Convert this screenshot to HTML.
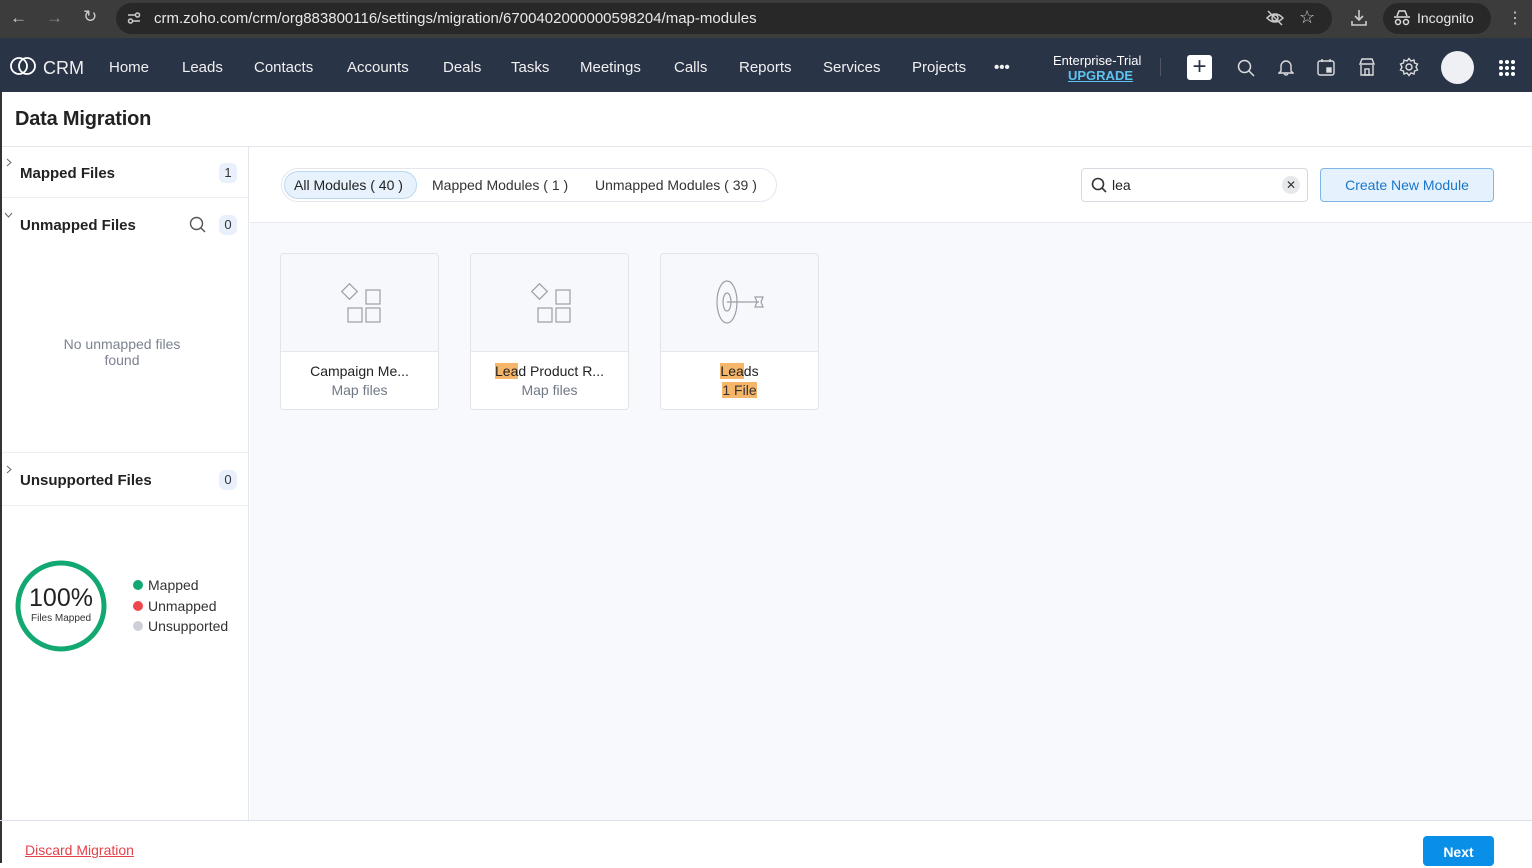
<!DOCTYPE html>
<html><head><meta charset="utf-8"><style>
*{box-sizing:border-box;margin:0;padding:0}
body{width:1532px;height:863px;overflow:hidden;font-family:"Liberation Sans",sans-serif;background:#fff;position:relative}
.abs{position:absolute}
#chrome{left:0;top:0;width:1532px;height:38px;background:#3c3c3c}
#url{left:116px;top:3px;width:1216px;height:31px;border-radius:16px;background:#282828;color:#e8e8e8;font-size:15px;line-height:31px;padding-left:38px}
#inc{left:1383px;top:3px;width:108px;height:31px;border-radius:16px;background:#282828;color:#e8e8e8;font-size:14px;line-height:31px;padding-left:34px}
#nav{left:0;top:38px;width:1532px;height:54px;background:#2a3447;color:#fff}
#nav .it{position:absolute;top:0;line-height:60px;font-size:15px;color:#f0f0f0}
.side{left:2px;top:147px;width:247px;height:673px;background:#fff;border-right:1px solid #e3e6ec}
.row{position:absolute;left:0;width:246px;border-bottom:1px solid #eceef2}
.row b{position:absolute;left:18px;font-size:15px;color:#222}
.badge{position:absolute;right:11px;width:18px;height:20px;border-radius:6px;background:#e8f1fb;font-size:13px;text-align:center;line-height:20px;color:#333}
.card{position:absolute;top:253px;width:159px;height:157px;border:1px solid #e2e4ea;border-radius:4px;background:#fff;overflow:hidden}
.card .top{height:98px;background:#f7f8fb;border-bottom:1px solid #e6e8ee;position:relative}
.card .t1{text-align:center;font-size:14px;color:#222;margin-top:11px}
.card .t2{text-align:center;font-size:14px;color:#707785;margin-top:3px}
.hl{background:#f6b66a}
</style></head><body>
<div id="chrome" class="abs"></div>
<div class="abs" style="left:10px;top:8px;color:#ccc;font-size:17px">←</div>
<div class="abs" style="left:46px;top:8px;color:#888;font-size:17px">→</div>
<div class="abs" style="left:83px;top:7px;color:#ccc;font-size:17px">↻</div>
<div id="url" class="abs">crm.zoho.com/crm/org883800116/settings/migration/6700402000000598204/map-modules</div>
<svg class="abs" style="left:127px;top:11px" width="14" height="14" fill="none" stroke="#ccc" stroke-width="1.5"><line x1="1" y1="4" x2="8" y2="4"/><circle cx="10.5" cy="4" r="2"/><line x1="6" y1="10" x2="13" y2="10"/><circle cx="3.5" cy="10" r="2"/></svg>
<svg class="abs" style="left:1265px;top:9px" width="20" height="18" fill="none" stroke="#ccc" stroke-width="1.5"><path d="M2 9 Q10 1 18 9 Q10 17 2 9Z"/><circle cx="10" cy="9" r="3"/><line x1="3" y1="2" x2="17" y2="16"/></svg>
<div class="abs" style="left:1299px;top:7px;color:#ccc;font-size:18px">☆</div>
<svg class="abs" style="left:1350px;top:9px" width="18" height="18" fill="none" stroke="#ccc" stroke-width="1.6"><line x1="9" y1="1" x2="9" y2="11"/><path d="M5 7 L9 11 L13 7"/><path d="M2 12 V16 H16 V12"/></svg>
<div id="inc" class="abs">Incognito</div>
<svg class="abs" style="left:1393px;top:10px" width="18" height="16" fill="none" stroke="#ddd" stroke-width="1.5"><path d="M4 6 L6 1 H12 L14 6"/><line x1="1" y1="7" x2="17" y2="7"/><circle cx="5" cy="12" r="2.5"/><circle cx="13" cy="12" r="2.5"/></svg>
<div class="abs" style="left:1507px;top:8px;color:#ccc;font-size:16px">⋮</div>
<div id="nav" class="abs">
 <svg class="abs" style="left:10px;top:19px" width="26" height="18" viewBox="0 0 26 18"><ellipse cx="9" cy="9" rx="8" ry="8" fill="none" stroke="#fff" stroke-width="1.8"/><ellipse cx="17" cy="9" rx="8" ry="8" fill="none" stroke="#fff" stroke-width="1.8"/></svg>
 <div class="it" style="left:43px;font-size:18px">CRM</div>
 <div class="it" style="left:109px">Home</div>
 <div class="it" style="left:182px">Leads</div>
 <div class="it" style="left:254px">Contacts</div>
 <div class="it" style="left:347px">Accounts</div>
 <div class="it" style="left:443px">Deals</div>
 <div class="it" style="left:511px">Tasks</div>
 <div class="it" style="left:580px">Meetings</div>
 <div class="it" style="left:674px">Calls</div>
 <div class="it" style="left:739px">Reports</div>
 <div class="it" style="left:823px">Services</div>
 <div class="it" style="left:912px">Projects</div>
 <div class="it" style="left:994px;font-weight:bold">•••</div>
 <div class="abs" style="left:1053px;top:15px;font-size:13px;color:#fff">Enterprise-Trial</div>
 <div class="abs" style="left:1068px;top:30px;font-size:13px;color:#5ec3f0;font-weight:bold;text-decoration:underline">UPGRADE</div>
 <div class="abs" style="left:1160px;top:20px;width:1px;height:18px;background:#556"></div>
 <div class="abs" style="left:1187px;top:17px;width:25px;height:25px;background:#fff;border-radius:3px;color:#2a3447;font-size:24px;line-height:24px;text-align:center">+</div>
 <svg class="abs" style="left:1237px;top:21px" width="18" height="18" fill="none" stroke="#ddd" stroke-width="1.5"><circle cx="7.5" cy="7.5" r="6"/><line x1="12" y1="12" x2="17" y2="17"/></svg>
 <svg class="abs" style="left:1278px;top:20px" width="16" height="18" fill="none" stroke="#ddd" stroke-width="1.4"><path d="M3 13 V8 A5 5 0 0 1 13 8 V13 L15 15 H1 Z"/><path d="M6 16 Q8 18 10 16"/></svg>
 <svg class="abs" style="left:1317px;top:20px" width="18" height="18" fill="none" stroke="#ddd" stroke-width="1.4"><rect x="1" y="3" width="16" height="14" rx="2"/><line x1="5" y1="1" x2="5" y2="4"/><line x1="13" y1="1" x2="13" y2="4"/><rect x="10" y="10" width="4" height="4" fill="#ddd"/></svg>
 <svg class="abs" style="left:1358px;top:20px" width="18" height="18" fill="none" stroke="#ddd" stroke-width="1.4"><path d="M2 6 L4 1 H14 L16 6 Z"/><path d="M3 7 V17 H15 V7"/><rect x="7" y="11" width="4" height="6"/></svg>
 <svg class="abs" style="left:1399px;top:19px" width="20" height="20" fill="none" stroke="#ddd" stroke-width="1.4"><circle cx="10" cy="10" r="3"/><path d="M10 1.5 L12 4 L15 3 L15.5 6 L18.5 7 L17 10 L18.5 13 L15.5 14 L15 17 L12 16 L10 18.5 L8 16 L5 17 L4.5 14 L1.5 13 L3 10 L1.5 7 L4.5 6 L5 3 L8 4 Z"/></svg>
 <div class="abs" style="left:1441px;top:13px;width:33px;height:33px;border-radius:50%;background:#eef0f4"></div>
 <svg class="abs" style="left:1498px;top:21px" width="18" height="18"><g fill="#fff"><circle cx="3" cy="3" r="2"/><circle cx="9" cy="3" r="2"/><circle cx="15" cy="3" r="2"/><circle cx="3" cy="9" r="2"/><circle cx="9" cy="9" r="2"/><circle cx="15" cy="9" r="2"/><circle cx="3" cy="15" r="2"/><circle cx="9" cy="15" r="2"/><circle cx="15" cy="15" r="2"/></g></svg>
</div>
<div class="abs" style="left:0;top:92px;width:2px;height:771px;background:#333"></div>
<div class="abs" style="left:15px;top:108px;font-size:20px;color:#222;font-weight:bold;letter-spacing:-0.2px">Data Migration</div>
<div class="abs" style="left:2px;top:146px;width:1530px;height:1px;background:#e3e6ec"></div>
<div class="side abs">
 <div class="row" style="top:0;height:51px"><svg class="abs" style="left:4px;top:11px" width="6" height="9" fill="none" stroke="#666"><path d="M1 1 L5 4.5 L1 8"/></svg><b style="top:18px">Mapped Files</b><div class="badge" style="top:16px">1</div></div>
 <div class="row" style="top:51px;height:255px"><svg class="abs" style="left:2px;top:14px" width="9" height="6" fill="none" stroke="#666"><path d="M1 1 L4.5 5 L8 1"/></svg><b style="top:19px">Unmapped Files</b>
  <svg class="abs" style="left:187px;top:18px" width="18" height="18" fill="none" stroke="#555" stroke-width="1.4"><circle cx="7.5" cy="7.5" r="6"/><line x1="12" y1="12" x2="16" y2="16"/></svg><div class="badge" style="top:17px">0</div>
  <div class="abs" style="left:0;width:240px;top:138px;text-align:center;font-size:14px;color:#7c8290;line-height:16px">No unmapped files<br>found</div></div>
 <div class="row" style="top:306px;height:53px"><svg class="abs" style="left:4px;top:12px" width="6" height="9" fill="none" stroke="#666"><path d="M1 1 L5 4.5 L1 8"/></svg><b style="top:19px">Unsupported Files</b><div class="badge" style="top:17px">0</div></div>
 <svg class="abs" style="left:12px;top:412px" width="94" height="94"><circle cx="47" cy="47" r="43" fill="none" stroke="#12a872" stroke-width="5"/></svg>
 <div class="abs" style="left:14px;top:437px;width:90px;text-align:center;font-size:25px;color:#222">100%</div>
 <div class="abs" style="left:14px;top:466px;width:90px;text-align:center;font-size:10px;color:#333">Files Mapped</div>
 <div class="abs" style="left:131px;top:428px;font-size:14px;color:#333;line-height:20.5px">
  <div><span style="display:inline-block;width:10px;height:10px;border-radius:50%;background:#12a872;margin-right:5px"></span>Mapped</div>
  <div><span style="display:inline-block;width:10px;height:10px;border-radius:50%;background:#f0464e;margin-right:5px"></span>Unmapped</div>
  <div><span style="display:inline-block;width:10px;height:10px;border-radius:50%;background:#cdd0d6;margin-right:5px"></span>Unsupported</div>
 </div>
</div>
<div class="abs" style="left:250px;top:222px;width:1282px;height:598px;background:#f7f9fc;border-top:1px solid #e6e9ef"></div>
<div class="abs" style="left:281px;top:168px;width:496px;height:34px;border:1px solid #e3e6ec;border-radius:17px;background:#fff"></div>
<div class="abs" style="left:284px;top:171px;width:133px;height:28px;border:1px solid #b9d7f0;border-radius:14px;background:#e7f2fc"></div>
<div class="abs" style="left:294px;top:177px;font-size:14px;color:#222">All Modules ( 40 )</div>
<div class="abs" style="left:432px;top:177px;font-size:14px;color:#333">Mapped Modules ( 1 )</div>
<div class="abs" style="left:595px;top:177px;font-size:14px;color:#333">Unmapped Modules ( 39 )</div>
<div class="abs" style="left:1081px;top:168px;width:227px;height:34px;border:1px solid #d6d9e0;border-radius:4px;background:#fff"></div>
<svg class="abs" style="left:1091px;top:177px" width="16" height="16"><circle cx="7" cy="7" r="5.5" fill="none" stroke="#333" stroke-width="1.6"/><line x1="11" y1="11" x2="15" y2="15" stroke="#333" stroke-width="1.6"/></svg>
<div class="abs" style="left:1112px;top:177px;font-size:14px;color:#222">lea</div>
<div class="abs" style="left:1282px;top:176px;width:18px;height:18px;border-radius:50%;background:#e6e8ec;font-size:12px;text-align:center;line-height:18px;color:#333">✕</div>
<div class="abs" style="left:1320px;top:168px;width:174px;height:34px;border:1px solid #7fb6e6;border-radius:4px;background:#e5f2fd;color:#1a76c9;font-size:14px;text-align:center;line-height:32px">Create New Module</div>
<div class="card" style="left:280px"><div class="top"><svg class="abs" style="left:58px;top:28px" width="44" height="42" viewBox="0 0 44 42" fill="none" stroke="#9a9ea8" stroke-width="1.2"><rect x="5" y="4" width="11" height="11" transform="rotate(45 10.5 9.5)"/><rect x="27" y="8" width="14" height="14"/><rect x="9" y="26" width="14" height="14"/><rect x="27" y="26" width="14" height="14"/></svg></div><div class="t1">Campaign Me...</div><div class="t2">Map files</div></div>
<div class="card" style="left:470px"><div class="top"><svg class="abs" style="left:58px;top:28px" width="44" height="42" viewBox="0 0 44 42" fill="none" stroke="#9a9ea8" stroke-width="1.2"><rect x="5" y="4" width="11" height="11" transform="rotate(45 10.5 9.5)"/><rect x="27" y="8" width="14" height="14"/><rect x="9" y="26" width="14" height="14"/><rect x="27" y="26" width="14" height="14"/></svg></div><div class="t1"><span class="hl">Lea</span>d Product R...</div><div class="t2">Map files</div></div>
<div class="card" style="left:660px"><div class="top"><svg class="abs" style="left:52px;top:25px" width="56" height="46" viewBox="0 0 56 46" fill="none" stroke="#9a9ea8" stroke-width="1.2"><ellipse cx="14" cy="23" rx="10" ry="21"/><ellipse cx="14" cy="23" rx="4" ry="9"/><line x1="14" y1="23" x2="46" y2="23"/><path d="M42 18 L50 18 L48 23 L50 28 L42 28 L44 23 Z"/></svg></div><div class="t1"><span class="hl">Lea</span>ds</div><div class="t2"><span class="hl" style="color:#333">1 File</span></div></div>
<div class="abs" style="left:0;top:820px;width:1532px;height:1px;background:#dde2ea"></div>
<div class="abs" style="left:25px;top:842px;font-size:14px;color:#e2434b;text-decoration:underline">Discard Migration</div>
<div class="abs" style="left:1423px;top:836px;width:71px;height:30px;border-radius:4px;background:#0a8fe8;color:#fff;font-size:14px;font-weight:bold;text-align:center;line-height:32px">Next</div>
</body></html>
